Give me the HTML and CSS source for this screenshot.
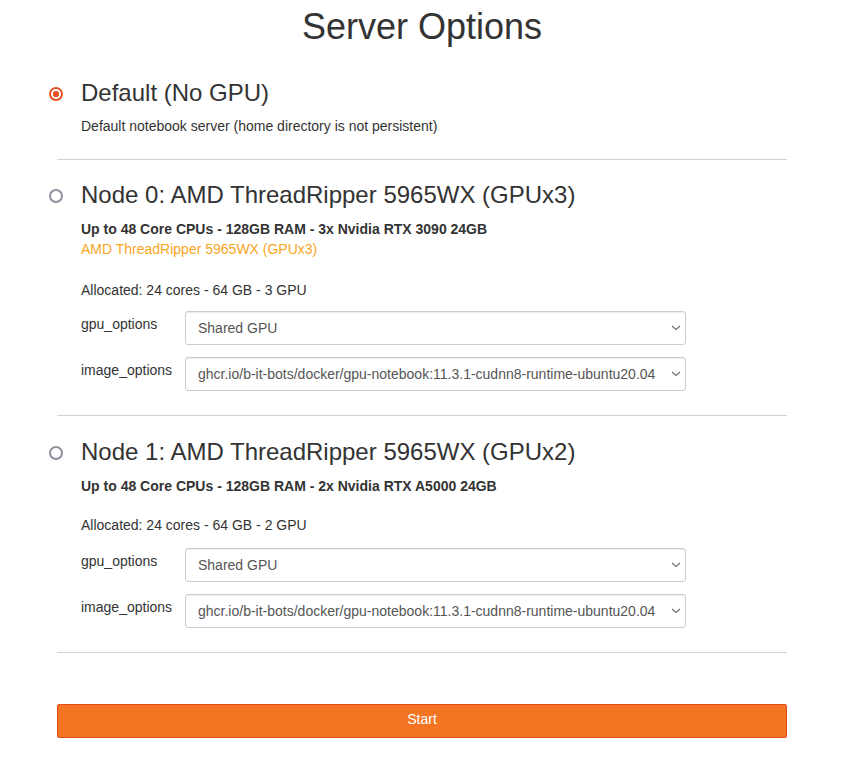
FILE: index.html
```html
<!DOCTYPE html>
<html>
<head>
<meta charset="utf-8">
<title>Server Options</title>
<link rel="stylesheet" href="styles.css">
</head>
<body>
<form class="container">
  <h1 class="title">Server Options</h1>

  <label class="option">
    <div class="option-head">
      <input type="radio" name="profile" checked>
      <h3 class="option-title">Default (No GPU)</h3>
    </div>
    <div class="option-body">
      <p class="desc">Default notebook server (home directory is not persistent)</p>
    </div>
  </label>
  <hr class="sep">

  <label class="option">
    <div class="option-head">
      <input type="radio" name="profile">
      <h3 class="option-title">Node 0: AMD ThreadRipper 5965WX (GPUx3)</h3>
    </div>
    <div class="option-body">
      <p class="specs">Up to 48 Core CPUs - 128GB RAM - 3x Nvidia RTX 3090 24GB</p>
      <p class="note">AMD ThreadRipper 5965WX (GPUx3)</p>
      <p class="alloc alloc-a">Allocated: 24 cores - 64 GB - 3 GPU</p>
      <div class="field">
        <span class="field-label">gpu_options</span>
        <span class="select-wrap">
          <select class="control"><option>Shared GPU</option></select>
          <svg class="chev" width="10" height="6" viewBox="0 0 10 6"><path d="M1 1 L5 4.5 L9 1" fill="none" stroke="#6d6d6d" stroke-width="1.1"/></svg>
        </span>
      </div>
      <div class="field">
        <span class="field-label">image_options</span>
        <span class="select-wrap">
          <select class="control"><option>ghcr.io/b-it-bots/docker/gpu-notebook:11.3.1-cudnn8-runtime-ubuntu20.04</option></select>
          <svg class="chev" width="10" height="6" viewBox="0 0 10 6"><path d="M1 1 L5 4.5 L9 1" fill="none" stroke="#6d6d6d" stroke-width="1.1"/></svg>
        </span>
      </div>
    </div>
  </label>
  <hr class="sep sep-fields">

  <label class="option option-last">
    <div class="option-head">
      <input type="radio" name="profile">
      <h3 class="option-title">Node 1: AMD ThreadRipper 5965WX (GPUx2)</h3>
    </div>
    <div class="option-body">
      <p class="specs">Up to 48 Core CPUs - 128GB RAM - 2x Nvidia RTX A5000 24GB</p>
      <p class="alloc alloc-b">Allocated: 24 cores - 64 GB - 2 GPU</p>
      <div class="field">
        <span class="field-label">gpu_options</span>
        <span class="select-wrap">
          <select class="control"><option>Shared GPU</option></select>
          <svg class="chev" width="10" height="6" viewBox="0 0 10 6"><path d="M1 1 L5 4.5 L9 1" fill="none" stroke="#6d6d6d" stroke-width="1.1"/></svg>
        </span>
      </div>
      <div class="field">
        <span class="field-label">image_options</span>
        <span class="select-wrap">
          <select class="control"><option>ghcr.io/b-it-bots/docker/gpu-notebook:11.3.1-cudnn8-runtime-ubuntu20.04</option></select>
          <svg class="chev" width="10" height="6" viewBox="0 0 10 6"><path d="M1 1 L5 4.5 L9 1" fill="none" stroke="#6d6d6d" stroke-width="1.1"/></svg>
        </span>
      </div>
    </div>
  </label>
  <hr class="sep sep-fields">

  <button type="button" class="start">Start</button>
</form>
</body>
</html>
```

FILE: styles.css
```css
html, body {
  margin: 0;
  padding: 0;
  background: #fff;
}
body {
  font-family: "Liberation Sans", Arial, Helvetica, sans-serif;
  font-size: 14px;
  line-height: 20px;
  color: #333;
}
.container {
  width: 730px;
  margin: 0 0 0 57px;
  padding: 0;
}
.title {
  margin: 7px 0 0 0;
  font-size: 36px;
  line-height: 40px;
  font-weight: 400;
  text-align: center;
  color: #333;
}
.option {
  display: block;
  cursor: pointer;
}
.option-head {
  display: flex;
  align-items: center;
  margin-top: 33px;
}
.sep + .option .option-head {
  margin-top: 22px;
}
.sep + .option-last .option-head {
  margin-top: 23px;
}
.option-head input {
  -webkit-appearance: none;
  appearance: none;
  box-sizing: border-box;
  width: 14px;
  height: 14px;
  margin: 0 18px 0 -8px;
  border: 2px solid #8f8f9d;
  border-radius: 50%;
  background: #fff;
  flex: none;
  position: relative;
  top: 1px;
}
.option-head input:checked {
  border-color: #e8562a;
  background: radial-gradient(circle, #e8562a 0 3px, #fff 3.5px);
}
.option-title {
  margin: 0;
  font-size: 24px;
  line-height: 26px;
  font-weight: 400;
  color: #333;
}
.option-body {
  padding-left: 24px;
}
.desc {
  margin: 10px 0 0 0;
}
.specs {
  margin: 11px 0 0 0;
  font-weight: 700;
}
.note {
  margin: 0;
  color: #f8a51e;
}
.alloc {
  margin: 0;
}
.alloc-a {
  margin-top: 21px;
}
.alloc-b {
  margin-top: 19px;
}
.field {
  display: flex;
  align-items: flex-start;
  margin-top: 12px;
}
.alloc + .field {
  margin-top: 11px;
}
.alloc-b + .field {
  margin-top: 13px;
}
.field-label {
  width: 104px;
  flex: none;
  padding-top: 3px;
  line-height: 20px;
}
.select-wrap {
  position: relative;
  display: block;
  width: 501px;
  height: 34px;
}
.control {
  -webkit-appearance: none;
  appearance: none;
  display: block;
  width: 501px;
  height: 34px;
  padding: 6px 30px 6px 12px;
  font-family: "Liberation Sans", Arial, Helvetica, sans-serif;
  font-size: 14px;
  color: #555;
  background: #fff;
  border: 1px solid #ccc;
  border-radius: 3px;
  box-shadow: inset 0 1px 1px rgba(0,0,0,0.075);
  box-sizing: border-box;
}
.chev {
  position: absolute;
  right: 5px;
  top: 14px;
  pointer-events: none;
}
.sep {
  margin: 23px 0 0 0;
  border: 0;
  border-top: 1px solid #d2d2d2;
  height: 0;
}
.sep-fields {
  margin-top: 24px;
}
.start {
  display: block;
  width: 730px;
  height: 34px;
  margin-top: 51px;
  padding: 4px 12px 8px;
  font-family: "Liberation Sans", Arial, Helvetica, sans-serif;
  font-size: 14px;
  line-height: 20px;
  color: #fff;
  background: #f37524;
  border: 1px solid #e34e15;
  border-radius: 2px;
  cursor: pointer;
}
```
